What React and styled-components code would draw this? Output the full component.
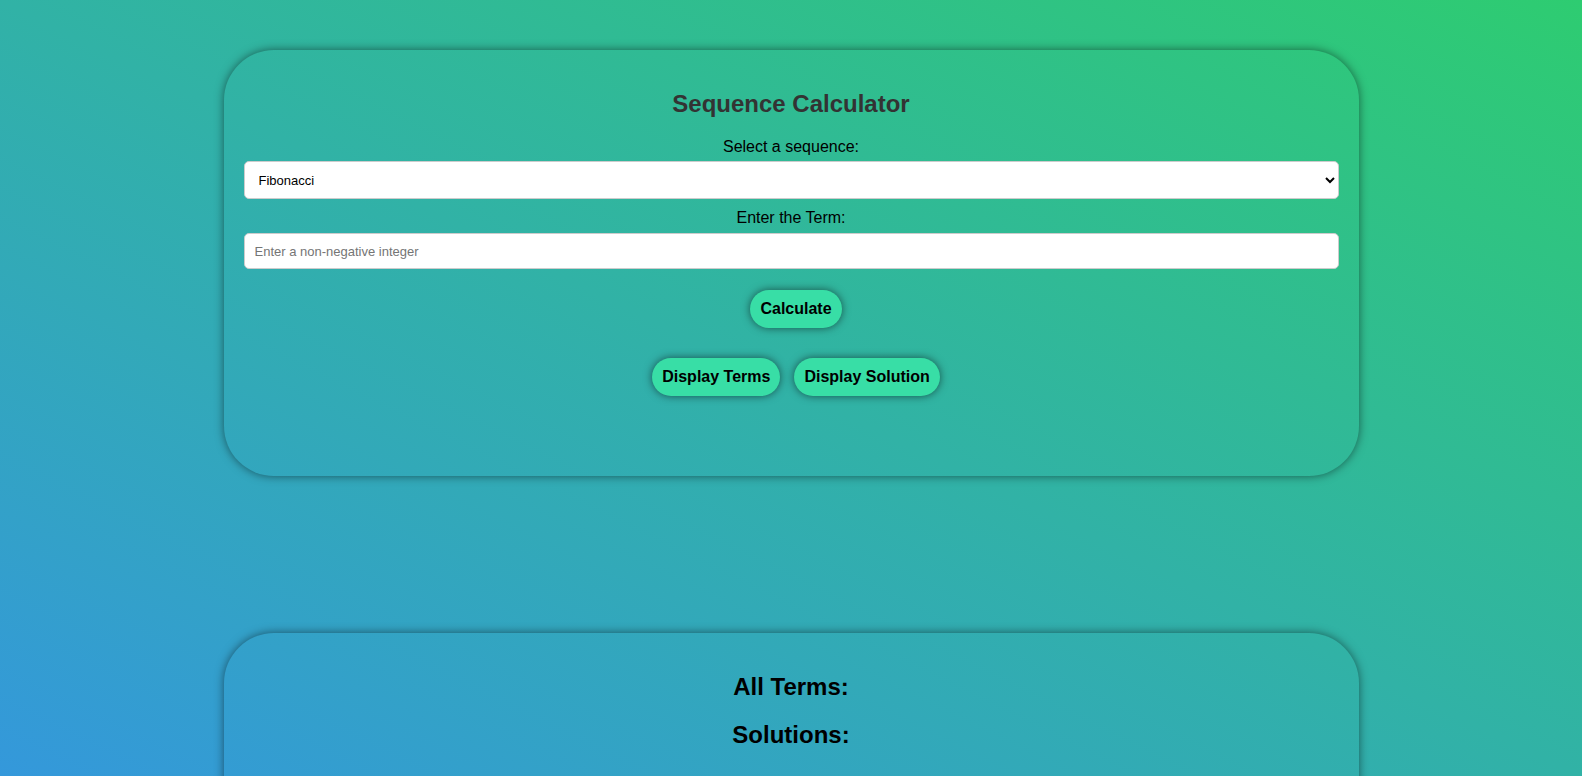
import React, { useState } from "react"
import styled, { createGlobalStyle } from "styled-components"

const GlobalStyle = createGlobalStyle`
  html, body {
    margin: 0;
    padding: 0;
  }
  body {
    font-family: "Liberation Sans", Arial, sans-serif;
    min-height: 100vh;
    background: linear-gradient(to top right, #3498db, #2ecc71);
    background-attachment: fixed;
  }
`

const Page = styled.div`
  display: flex;
  flex-direction: column;
  align-items: center;
  padding-top: 50px;
`

const Card = styled.div`
  width: 1095px;
  padding: 20px 20px ${props => props.$bottom || "20px"};
  border-radius: 50px;
  box-shadow: 0 0 10px rgba(0, 0, 0, 0.5);
  display: flex;
  flex-direction: column;
  align-items: center;
  margin-bottom: ${props => props.$after || "0"};
  min-height: ${props => props.$minHeight || "auto"};
`

const Title = styled.h2`
  font-size: 24px;
  line-height: 28px;
  font-weight: bold;
  color: #333;
  margin: 20px 0;
`

const Heading = styled.h2`
  font-size: 24px;
  line-height: 28px;
  font-weight: bold;
  color: #000;
  margin: 20px 0 0;
`

const Label = styled.label`
  font-size: 16px;
  line-height: 18px;
  color: #000;
  margin-bottom: ${props => props.$gap || "5px"};
`

const Select = styled.select`
  width: 100%;
  height: 38px;
  box-sizing: border-box;
  padding: 0 10px;
  font-family: "Liberation Sans", Arial, sans-serif;
  font-size: 13px;
  color: #000;
  background: #fff;
  border: 1px solid #ccc;
  border-radius: 5px;
  margin-bottom: 10px;
`

const Input = styled.input`
  width: 100%;
  height: 36px;
  box-sizing: border-box;
  padding: 0 10px;
  font-family: "Liberation Sans", Arial, sans-serif;
  font-size: 13px;
  background: #fff;
  border: 1px solid #ccc;
  border-radius: 5px;
  ::placeholder {
    color: #757575;
  }
`

const Button = styled.button`
  font-family: "Liberation Sans", Arial, sans-serif;
  font-size: 16px;
  line-height: 18px;
  font-weight: bold;
  color: #000;
  background: #38dea6;
  border: none;
  border-radius: 20px;
  padding: 10px;
  margin-left: 10px;
  box-shadow: 0 0 8px rgba(0, 0, 0, 0.55);
  cursor: pointer;
  :hover {
    background: #2fd197;
  }
`

const CalcButton = styled(Button)`
  margin-top: 21px;
`

const ButtonRow = styled.div`
  display: flex;
  gap: 4px;
  margin-top: 30px;
`

const App = () => {
  const [sequence, setSequence] = useState("fibonacci")
  const [term, setTerm] = useState("")

  return (
    <>
      <GlobalStyle />
      <Page>
        <Card $bottom="80px" $after="157px">
          <Title>Sequence Calculator</Title>
          <Label htmlFor="sequence">Select a sequence:</Label>
          <Select
            id="sequence"
            value={sequence}
            onChange={(event) => setSequence(event.target.value)}
          >
            <option value="fibonacci">Fibonacci</option>
            <option value="arithmetic">Arithmetic</option>
            <option value="geometric">Geometric</option>
          </Select>
          <Label htmlFor="term" $gap="6px">Enter the Term:</Label>
          <Input
            id="term"
            type="text"
            placeholder="Enter a non-negative integer"
            value={term}
            onChange={(event) => setTerm(event.target.value)}
          />
          <CalcButton>Calculate</CalcButton>
          <ButtonRow>
            <Button>Display Terms</Button>
            <Button>Display Solution</Button>
          </ButtonRow>
        </Card>
        <Card $minHeight="200px" $after="50px">
          <Heading>All Terms:</Heading>
          <Heading>Solutions:</Heading>
        </Card>
      </Page>
    </>
  )
}

export default App
